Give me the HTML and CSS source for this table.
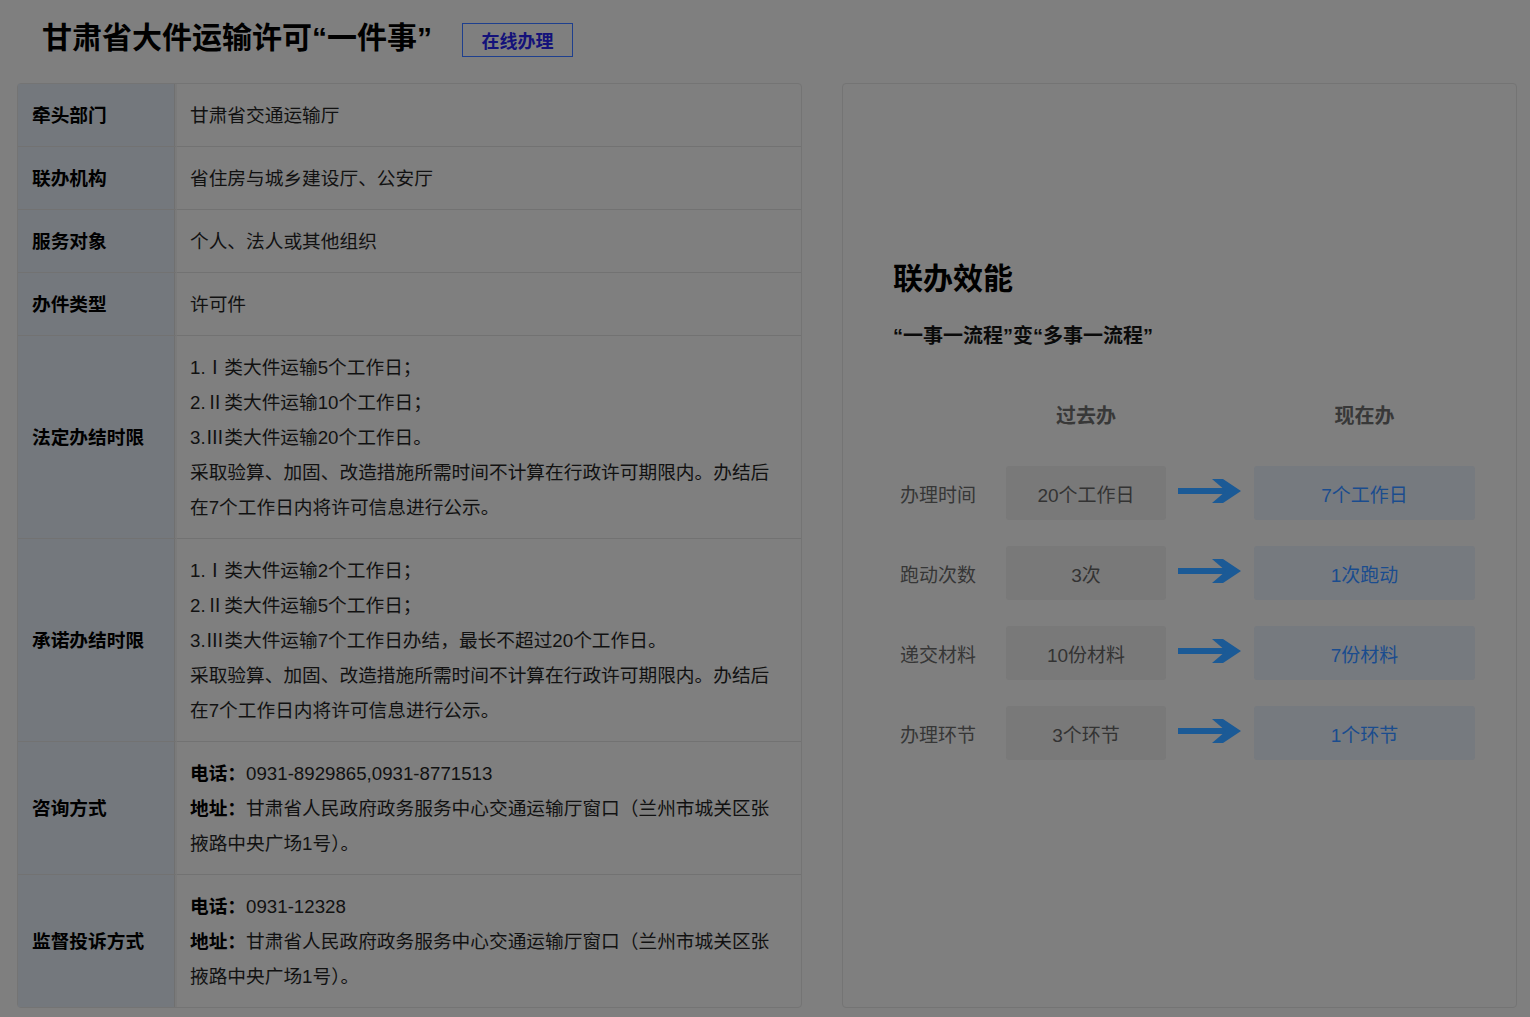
FILE: index.html
```html
<!DOCTYPE html>
<html lang="zh-CN">
<head>
<meta charset="utf-8">
<title>甘肃省大件运输许可“一件事”</title>
<link rel="stylesheet" href="styles.css">
</head>
<body>
<div class="page">
  <div class="head">
    <h1 class="title">甘肃省大件运输许可“一件事”</h1>
    <a class="btn">在线办理</a>
  </div>
  <div class="main">
    <table class="info">
      <tr><td class="lab">牵头部门</td><td class="val">甘肃省交通运输厅</td></tr>
      <tr><td class="lab">联办机构</td><td class="val">省住房与城乡建设厅、公安厅</td></tr>
      <tr><td class="lab">服务对象</td><td class="val">个人、法人或其他组织</td></tr>
      <tr><td class="lab">办件类型</td><td class="val">许可件</td></tr>
      <tr><td class="lab">法定办结时限</td><td class="val">1.Ⅰ类大件运输5个工作日；<br>2.Ⅱ类大件运输10个工作日；<br>3.Ⅲ类大件运输20个工作日。<br>采取验算、加固、改造措施所需时间不计算在行政许可期限内。办结后在7个工作日内将许可信息进行公示。</td></tr>
      <tr><td class="lab">承诺办结时限</td><td class="val">1.Ⅰ类大件运输2个工作日；<br>2.Ⅱ类大件运输5个工作日；<br>3.Ⅲ类大件运输7个工作日办结，最长不超过20个工作日。<br>采取验算、加固、改造措施所需时间不计算在行政许可期限内。办结后在7个工作日内将许可信息进行公示。</td></tr>
      <tr><td class="lab">咨询方式</td><td class="val"><span class="k">电话：</span><span>0931-8929865,0931-8771513</span><br><span class="k">地址：</span><span>甘肃省人民政府政务服务中心交通运输厅窗口（兰州市城关区张掖路中央广场1号）。</span></td></tr>
      <tr><td class="lab">监督投诉方式</td><td class="val"><span class="k">电话：</span><span>0931-12328</span><br><span class="k">地址：</span><span>甘肃省人民政府政务服务中心交通运输厅窗口（兰州市城关区张掖路中央广场1号）。</span></td></tr>
    </table>
    <div class="panel">
      <h2 class="ptitle">联办效能</h2>
      <p class="psub">“一事一流程”变“多事一流程”</p>
      <div class="grid">
        <div></div><div class="hd">过去办</div><div></div><div class="hd">现在办</div>

        <div class="rl">办理时间</div><div class="old">20个工作日</div>
        <div class="arr"><svg width="64" height="28" viewBox="0 0 64 28"><rect x="0" y="11" width="50" height="6" fill="#1b5a96"/><polygon points="34,2 45,2 63,14 45,26 34,26 48,14" fill="#1b5a96"/></svg></div>
        <div class="new">7个工作日</div>

        <div class="rl">跑动次数</div><div class="old">3次</div>
        <div class="arr"><svg width="64" height="28" viewBox="0 0 64 28"><rect x="0" y="11" width="50" height="6" fill="#1b5a96"/><polygon points="34,2 45,2 63,14 45,26 34,26 48,14" fill="#1b5a96"/></svg></div>
        <div class="new">1次跑动</div>

        <div class="rl">递交材料</div><div class="old">10份材料</div>
        <div class="arr"><svg width="64" height="28" viewBox="0 0 64 28"><rect x="0" y="11" width="50" height="6" fill="#1b5a96"/><polygon points="34,2 45,2 63,14 45,26 34,26 48,14" fill="#1b5a96"/></svg></div>
        <div class="new">7份材料</div>

        <div class="rl">办理环节</div><div class="old">3个环节</div>
        <div class="arr"><svg width="64" height="28" viewBox="0 0 64 28"><rect x="0" y="11" width="50" height="6" fill="#1b5a96"/><polygon points="34,2 45,2 63,14 45,26 34,26 48,14" fill="#1b5a96"/></svg></div>
        <div class="new">1个环节</div>
      </div>
    </div>
  </div>
</div>
</body>
</html>
```
FILE: styles.css
```css
html, body {
  margin: 0;
  padding: 0;
  background: #7f7f7f;
}
body {
  font-family: "Liberation Sans", "Noto Sans CJK SC", sans-serif;
  color: #111;
}
.page {
  padding: 0 13px 0 17px;
}
.head {
  display: flex;
  align-items: center;
  height: 83px;
  padding-left: 25px;
}
.title {
  margin: 0;
  font-size: 30px;
  font-weight: bold;
  color: #000;
  line-height: 40px;
  margin-top: -8px;
}
.btn {
  margin-left: 30px;
  margin-top: -4px;
  width: 109px;
  height: 32px;
  border: 1px solid #1e3f8e;
  display: flex;
  align-items: center;
  justify-content: center;
  font-size: 18px;
  font-weight: bold;
  color: #14127a;
}
.main {
  display: flex;
  gap: 40px;
  align-items: stretch;
}
.info {
  width: 785px;
  flex: none;
  border: 1px solid #747474;
  border-radius: 4px;
  border-spacing: 0;
  font-size: 18.7px;
  line-height: 35px;
}
.info td {
  padding: 14px 28px 13px 13px;
  border-bottom: 1px solid #727272;
  vertical-align: middle;
}
.info tr:last-child td {
  border-bottom: none;
}
.lab {
  width: 130px;
  background: #74787d;
  font-weight: bold;
  color: #000;
  padding-left: 14px !important;
  padding-right: 13px !important;
  border-right: 2px solid #7a7a7a;
  box-shadow: inset -1px 0 0 #707070;
}
.val {
  color: #111;
}
.val .k {
  font-weight: bold;
  color: #000;
}
.panel {
  flex: 1;
  border: 1px solid #747474;
  border-radius: 4px;
  padding: 175px 0 0 50px;
}
.ptitle {
  margin: 0;
  font-size: 30px;
  line-height: 40px;
  font-weight: bold;
  color: #000;
}
.psub {
  margin: 22px 0 0;
  font-size: 20px;
  line-height: 30px;
  font-weight: bold;
  color: #0a0a0a;
}
.grid {
  margin-top: 50px;
  margin-left: 7px;
  display: grid;
  grid-template-columns: 106px 160px 88px 221px;
  grid-template-rows: 39px;
  grid-auto-rows: 54px;
  row-gap: 26px;
  align-items: center;
}
.grid .hd {
  align-self: start;
  text-align: center;
  font-size: 20px;
  font-weight: bold;
  color: #383838;
  line-height: 30px;
}
.rl {
  font-size: 19px;
  color: #363636;
}
.old, .new {
  height: 54px;
  display: flex;
  align-items: center;
  justify-content: center;
  border-radius: 3px;
  font-size: 19px;
}
.old {
  background: #797979;
  color: #333;
}
.new {
  background: #767a7f;
  color: #1a4c8e;
}
.arr {
  display: flex;
  justify-content: center;
  align-items: center;
  padding-bottom: 4px;
}
.arr svg {
  display: block;
}
```
